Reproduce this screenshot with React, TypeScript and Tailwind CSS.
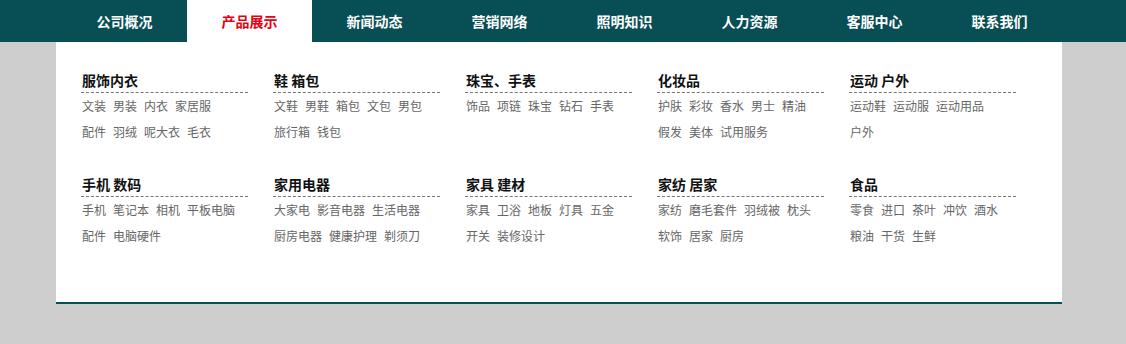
const navItems = ['公司概况', '产品展示', '新闻动态', '营销网络', '照明知识', '人力资源', '客服中心', '联系我们'];

type Category = { title: string; links: string[][] };

const categories: Category[] = [
  { title: '服饰内衣', links: [['文装', '男装', '内衣', '家居服'], ['配件', '羽绒', '呢大衣', '毛衣']] },
  { title: '鞋 箱包', links: [['文鞋', '男鞋', '箱包', '文包', '男包'], ['旅行箱', '钱包']] },
  { title: '珠宝、手表', links: [['饰品', '项链', '珠宝', '钻石', '手表']] },
  { title: '化妆品', links: [['护肤', '彩妆', '香水', '男士', '精油'], ['假发', '美体', '试用服务']] },
  { title: '运动 户外', links: [['运动鞋', '运动服', '运动用品'], ['户外']] },
  { title: '手机 数码', links: [['手机', '笔记本', '相机', '平板电脑'], ['配件', '电脑硬件']] },
  { title: '家用电器', links: [['大家电', '影音电器', '生活电器'], ['厨房电器', '健康护理', '剃须刀']] },
  { title: '家具 建材', links: [['家具', '卫浴', '地板', '灯具', '五金'], ['开关', '装修设计']] },
  { title: '家纺 居家', links: [['家纺', '磨毛套件', '羽绒被', '枕头'], ['软饰', '居家', '厨房']] },
  { title: '食品', links: [['零食', '进口', '茶叶', '冲饮', '酒水'], ['粮油', '干货', '生鲜']] },
];

function CategoryBlock({ cat }: { cat: Category }) {
  return (
    <div className="w-[167px]">
      <h3 className="h-[25px] border-b border-dashed border-[#777] pl-px text-[14px] font-bold leading-[24px] text-[#111]">
        {cat.title}
      </h3>
      <div className="h-[52px] pl-px">
        {cat.links.map((row, i) => (
          <div key={i} className="flex h-[26px] items-center gap-x-[7px] text-[12px] text-[#666]">
            {row.map((l) => (
              <a key={l} href="#" className="whitespace-nowrap">
                {l}
              </a>
            ))}
          </div>
        ))}
      </div>
    </div>
  );
}

export default function App() {
  return (
    <div className="h-[344px] w-full bg-[#cecece] font-['Noto_Sans_CJK_SC',sans-serif]">
      <nav className="h-[42px] bg-[#074e55]">
        <ul className="ml-[62px] flex h-full">
          {navItems.map((item, i) => (
            <li
              key={item}
              className={
                i === 1
                  ? 'flex h-full w-[125px] items-center justify-center bg-white text-[14px] font-bold text-[#e60012]'
                  : 'flex h-full w-[125px] items-center justify-center text-[14px] font-bold text-white'
              }
            >
              {item}
            </li>
          ))}
        </ul>
      </nav>
      <div className="ml-[56px] h-[262px] w-[1006px] border-b-2 border-[#074e55] bg-white pl-[25px] pt-[26px]">
        <div className="grid grid-cols-[repeat(5,167px)] gap-x-[25px] gap-y-[27px]">
          {categories.map((c) => (
            <CategoryBlock key={c.title} cat={c} />
          ))}
        </div>
      </div>
    </div>
  );
}
